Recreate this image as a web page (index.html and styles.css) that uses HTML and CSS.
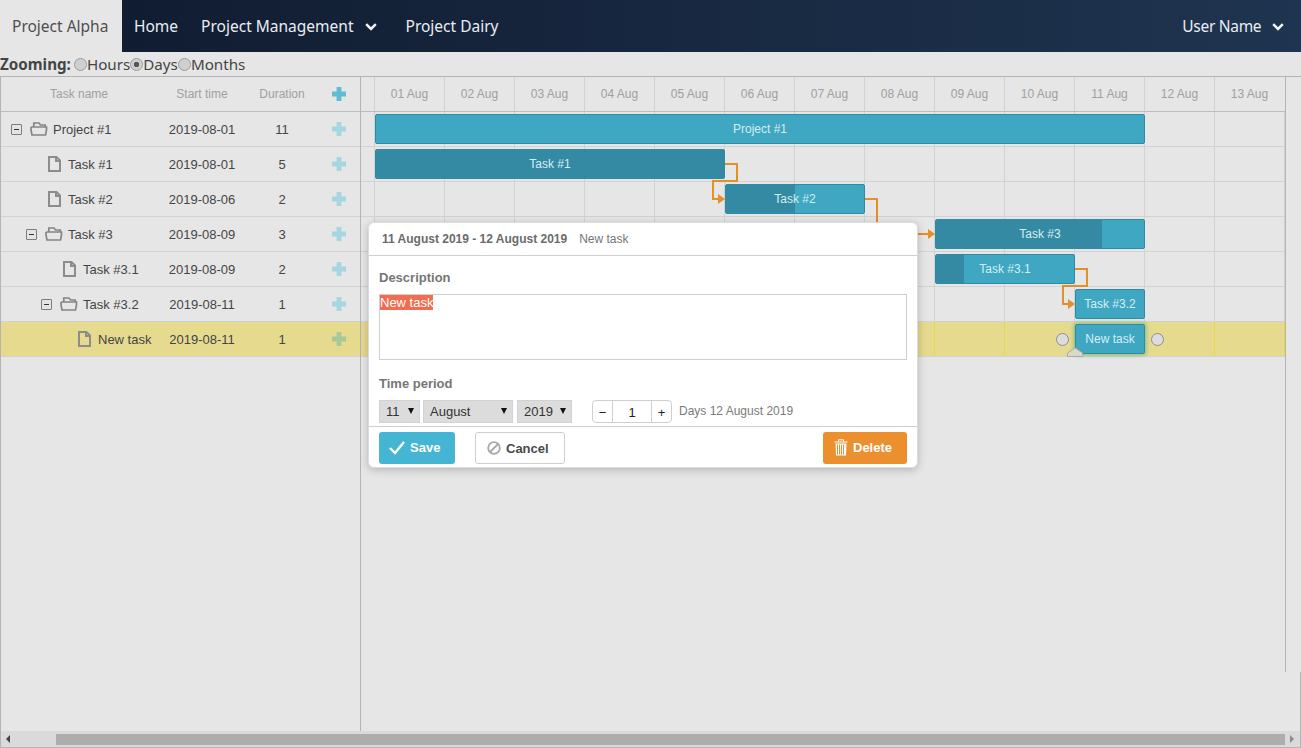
FILE: index.html
```html
<!DOCTYPE html>
<html lang="en">
<head>
<meta charset="UTF-8" />
<meta name="viewport" content="width=device-width, initial-scale=1" />
<title>Project Alpha</title>
<link rel="stylesheet" href="styles.css">
</head>
<body>

<svg class="icon-defs" width="0" height="0">
  <symbol id="i-folder" viewBox="0 0 18 14">
    <path d="M3.800 5V1h5.200l1.500 2h4.700v2M1 5h15.500v1.500M1 5v3l1 5h13.500l1-5V5" fill="none" stroke="#858585" stroke-width="1.700"/>
  </symbol>
  <symbol id="i-file" viewBox="0 0 13 16">
    <path d="M1 1h7.500l3.500 3.500V15H1zM8 1v4h4" fill="none" stroke="#8c8c8c" stroke-width="2"/>
  </symbol>
  <symbol id="i-plus" viewBox="0 0 14 14">
    <path d="M4.600 0h4.800v4.600H14v4.800H9.400V14H4.600V9.400H0V4.600h4.600z" fill="currentColor"/>
  </symbol>
  <symbol id="i-chevron" viewBox="0 0 12 8">
    <path d="M1.200 1.200L6 6l4.800-4.800" fill="none" stroke="currentColor" stroke-width="2.500"/>
  </symbol>
</svg>

<nav class="topnav">
  <a class="brand">Project Alpha</a>
  <a class="nav-link nav-home">Home</a>
  <a class="nav-link nav-drop">Project Management <svg class="chevron"><use href="#i-chevron"/></svg></a>
  <a class="nav-link">Project Dairy</a>
  <a class="nav-link nav-user">User Name <svg class="chevron"><use href="#i-chevron"/></svg></a>
</nav>

<div class="zooming">
  <b>Zooming:</b>
  <label><input type="radio" name="zoom">Hours</label>
  <label><input type="radio" name="zoom" checked>Days</label>
  <label><input type="radio" name="zoom">Months</label>
</div>

<div class="gantt">
  <div class="gantt-body">
    <div class="grid">
      <div class="grid-head">
        <div>Task name</div>
        <div>Start time</div>
        <div>Duration</div>
        <div class="add add-head"><svg><use href="#i-plus"/></svg></div>
      </div>

      <div class="grid-row">
        <div class="tree lvl0"><span class="toggle"></span><svg class="i-folder"><use href="#i-folder"/></svg>Project #1</div>
        <div>2019-08-01</div><div>11</div>
        <div class="add"><svg><use href="#i-plus"/></svg></div>
      </div>
      <div class="grid-row">
        <div class="tree lvl1"><span class="no-toggle"></span><svg class="i-file"><use href="#i-file"/></svg>Task #1</div>
        <div>2019-08-01</div><div>5</div>
        <div class="add"><svg><use href="#i-plus"/></svg></div>
      </div>
      <div class="grid-row">
        <div class="tree lvl1"><span class="no-toggle"></span><svg class="i-file"><use href="#i-file"/></svg>Task #2</div>
        <div>2019-08-06</div><div>2</div>
        <div class="add"><svg><use href="#i-plus"/></svg></div>
      </div>
      <div class="grid-row">
        <div class="tree lvl1"><span class="toggle"></span><svg class="i-folder"><use href="#i-folder"/></svg>Task #3</div>
        <div>2019-08-09</div><div>3</div>
        <div class="add"><svg><use href="#i-plus"/></svg></div>
      </div>
      <div class="grid-row">
        <div class="tree lvl2"><span class="no-toggle"></span><svg class="i-file"><use href="#i-file"/></svg>Task #3.1</div>
        <div>2019-08-09</div><div>2</div>
        <div class="add"><svg><use href="#i-plus"/></svg></div>
      </div>
      <div class="grid-row">
        <div class="tree lvl2"><span class="toggle"></span><svg class="i-folder"><use href="#i-folder"/></svg>Task #3.2</div>
        <div>2019-08-11</div><div>1</div>
        <div class="add"><svg><use href="#i-plus"/></svg></div>
      </div>
      <div class="grid-row selected">
        <div class="tree lvl3"><span class="no-toggle"></span><svg class="i-file"><use href="#i-file"/></svg>New task</div>
        <div>2019-08-11</div><div>1</div>
        <div class="add"><svg><use href="#i-plus"/></svg></div>
      </div>
    </div>

    <div class="timeline">
      <div class="scale">
        <div>01 Aug</div><div>02 Aug</div><div>03 Aug</div><div>04 Aug</div><div>05 Aug</div><div>06 Aug</div><div>07 Aug</div>
        <div>08 Aug</div><div>09 Aug</div><div>10 Aug</div><div>11 Aug</div><div>12 Aug</div><div>13 Aug</div>
      </div>
      <div class="tl-rows">
        <div class="tl-row"></div>
        <div class="tl-row"></div>
        <div class="tl-row"></div>
        <div class="tl-row"></div>
        <div class="tl-row"></div>
        <div class="tl-row"></div>
        <div class="tl-row selected"></div>
      </div>

      <!-- canvas offsets: x from timeline left (361), y from top of rows (112) -->
      <div class="canvas">
        <svg class="links" width="925" height="250">
          <g fill="none" stroke="#e59026" stroke-width="2">
            <path d="M364 52h12v17h-24v18h6"/>
            <path d="M504 87h12v30"/>
            <path d="M557 122h11"/>
            <path d="M714 157h12v17h-24v18h6"/>
          </g>
          <g fill="#e59026">
            <path d="M357 82l7 5-7 5z"/>
            <path d="M567 117l7 5-7 5z"/>
            <path d="M707 187l7 5-7 5z"/>
          </g>
        </svg>

        <div class="bar bar-project" style="left:14px;top:2px;width:770px"><span>Project #1</span></div>
        <div class="bar" style="left:14px;top:37px;width:350px"><i style="width:100%"></i><span>Task #1</span></div>
        <div class="bar" style="left:364px;top:72px;width:140px"><i style="width:50%"></i><span>Task #2</span></div>
        <div class="bar" style="left:574px;top:107px;width:210px"><i style="width:80%"></i><span>Task #3</span></div>
        <div class="bar" style="left:574px;top:142px;width:140px"><i style="width:20%"></i><span>Task #3.1</span></div>
        <div class="bar" style="left:714px;top:177px;width:70px"><span>Task #3.2</span></div>
        <div class="bar bar-active" style="left:714px;top:212px;width:70px"><span>New task</span></div>
        <div class="handle" style="left:695px;top:221px"></div>
        <div class="handle" style="left:790px;top:221px"></div>
        <svg class="drag" style="left:706px;top:235px" width="17" height="10"><path d="M.5 9.500V6L8 .8 15.500 6v3.500z" fill="#dcd8c8" stroke="#a9a9a9"/></svg>
      </div>
    </div>
  </div>

  <div class="scrollbar">
    <span class="arrow arrow-left"></span>
    <div class="thumb"></div>
    <span class="arrow arrow-right"></span>
  </div>

  <div class="lightbox">
    <div class="lb-head"><b>11 August 2019 - 12 August 2019</b><span>New task</span></div>
    <div class="lb-body">
      <h4>Description</h4>
      <div class="desc"><mark>New task</mark></div>
      <h4 class="period-title">Time period</h4>
      <div class="period">
        <div class="sel sel-day">11</div>
        <div class="sel sel-month">August</div>
        <div class="sel sel-year">2019</div>
        <div class="stepper"><button>&minus;</button><span>1</span><button>+</button></div>
        <div class="period-note">Days 12 August 2019</div>
      </div>
    </div>
    <div class="lb-foot">
      <button class="btn btn-save">
        <svg width="16" height="14" viewBox="0 0 16 14"><path d="M1 7l5 5 9-11" fill="none" stroke="#fff" stroke-width="2.400"/></svg>Save
      </button>
      <button class="btn btn-cancel">
        <svg width="14" height="14" viewBox="0 0 14 14"><circle cx="7" cy="7" r="5.800" fill="none" stroke="#a8a8a8" stroke-width="1.800"/><path d="M3 11l8-8" stroke="#a8a8a8" stroke-width="1.800"/></svg>Cancel
      </button>
      <button class="btn btn-delete">
        <svg width="14" height="17" viewBox="0 0 14 17"><path d="M4.500 2.500V.8h5v1.700M.5 3h13" stroke="#fff" fill="none"/><path d="M1.500 4.500h11l-.5 12H2z" fill="#fff"/><path d="M3.500 5.500v10M5.500 5.500v10M7.500 5.500v10M9.500 5.500v10" stroke="#ec8f2e"/></svg>Delete
      </button>
    </div>
  </div>
</div>

</body>
</html>
```
FILE: styles.css
```css
* {
  box-sizing: border-box;
}
html, body {
  height: 100%;
}
body {
  margin: 0;
  background: #e6e6e6;
  color: #454545;
  font-family: "Liberation Sans", Arial, sans-serif;
  font-size: 13px;
  overflow: hidden;
}
.icon-defs {
  position: absolute;
}

/* top bar */
.topnav {
  display: flex;
  align-items: center;
  height: 52px;
  background: linear-gradient(to right, #0f1a2e, #1f3450);
  font-family: "Noto Sans", sans-serif;
  font-size: 15.500px;
}
.topnav a {
  display: flex;
  align-items: center;
  height: 100%;
}
.brand {
  width: 122px;
  padding-left: 12px;
  background: #e6e6e6;
  color: #4f4f4f;
}
.nav-link {
  padding: 0 12px;
  color: #e9edf2;
  white-space: pre;
}
.nav-home {
  padding-right: 11px;
}
.nav-drop {
  padding-right: 17px;
}
.nav-user {
  margin-left: auto;
  padding-right: 17px;
  letter-spacing: -0.3px;
}
.chevron {
  width: 12px;
  height: 8px;
  margin-left: 7px;
  margin-top: 2px;
  color: #f2f4f6;
}

/* zoom radios */
.zooming {
  display: flex;
  align-items: center;
  height: 24px;
  font-family: "Noto Sans", sans-serif;
  font-size: 15.200px;
  color: #454545;
}
.zooming b {
  margin-right: 3px;
}
.zooming label {
  display: flex;
  align-items: center;
}
.zooming input {
  appearance: none;
  width: 13px;
  height: 13px;
  margin: 0;
  border: 1px solid #9c9c9c;
  border-radius: 50%;
  background: #cfcfcf;
}
.zooming input:checked {
  background: radial-gradient(circle, #555 0 2.500px, #cfcfcf 3px);
}

/* gantt */
.gantt {
  position: relative;
  height: 672px;
  border-left: 1px solid #b4b4b4;
  border-bottom: 1px solid #b4b4b4;
}
.gantt::after {
  content: "";
  position: absolute;
  right: 0;
  top: 596px;
  bottom: -1px;
  border-right: 1px solid #b4b4b4;
}
.gantt-body {
  display: flex;
  height: 655px;
  border-top: 1px solid #b4b4b4;
}
.grid {
  width: 360px;
  flex: none;
  border-right: 1px solid #b4b4b4;
}
.grid-head, .grid-row {
  display: grid;
  grid-template-columns: 156px 90px 70px 43px;
  align-items: center;
  text-align: center;
}
.grid-head {
  height: 35px;
  border-bottom: 1px solid #bdbdbd;
  color: #a0a0a0;
  font-size: 12px;
}
.grid-row {
  height: 35px;
  border-bottom: 1px solid #d2d2d2;
}
.grid-row.selected {
  background: #e6da8f;
  border-bottom-color: #d2d2d2;
}
.tree {
  display: flex;
  align-items: center;
  text-align: left;
}
.lvl0 { padding-left: 10px; }
.lvl1 { padding-left: 25px; }
.lvl2 { padding-left: 40px; }
.lvl3 { padding-left: 55px; }
.toggle, .no-toggle {
  flex: none;
  width: 11px;
  height: 11px;
  margin-right: 8px;
}
.toggle {
  border: 1px solid #7d7d7d;
  border-radius: 1px;
  background: linear-gradient(#333, #333) center / 5px 1px no-repeat #e4e4e4;
}
.i-folder {
  flex: none;
  width: 18px;
  height: 14px;
  margin-right: 5px;
}
.i-file {
  flex: none;
  width: 13px;
  height: 16px;
  margin: 0 7px 0 3px;
}
.add {
  display: flex;
  justify-content: center;
  color: #a6d6e0;
}
.add svg {
  width: 14px;
  height: 14px;
}
.add-head {
  color: #5fbcd3;
}
.selected .add {
  color: #a8c995;
}

/* timeline */
.timeline {
  position: relative;
  width: 925px;
  height: 595px;
  flex: none;
  border-right: 1px solid #b4b4b4;
}
.scale {
  display: grid;
  grid-template-columns: repeat(13, 70px);
  height: 35px;
  padding-left: 13px;
  border-bottom: 1px solid #bdbdbd;
  color: #a0a0a0;
  font-size: 12px;
}
.scale div {
  display: flex;
  align-items: center;
  justify-content: center;
  border-left: 1px solid #d2d2d2;
}
.tl-row {
  height: 35px;
  border-bottom: 1px solid #d2d2d2;
  background: repeating-linear-gradient(to right, #d2d2d2 0 1px, transparent 1px 70px) 13px 0 / 912px 100% no-repeat;
}
.tl-row.selected {
  background: repeating-linear-gradient(to right, #e8d84e 0 1px, transparent 1px 70px) 13px 0 / 912px 100% no-repeat, #e6da8f;
}
.canvas {
  position: absolute;
  left: 0;
  top: 35px;
  width: 100%;
}
.links {
  position: absolute;
  left: 0;
  top: 0;
}
.bar {
  position: absolute;
  height: 30px;
  padding-top: 1px;
  background: #3fa7c2;
  border: 1px solid #2f8ba3;
  border-radius: 2px;
  overflow: hidden;
  display: flex;
  align-items: center;
  justify-content: center;
  color: #d5eef4;
  font-size: 12px;
  line-height: 15px;
}
.bar i {
  position: absolute;
  left: 0;
  top: 0;
  bottom: 0;
  background: #348aa3;
}
.bar span {
  position: relative;
}
.bar-active {
  box-shadow: 0 0 4px 1px #7cb98e;
}
.handle {
  position: absolute;
  width: 13px;
  height: 13px;
  border: 1px solid #8f8f8f;
  border-radius: 50%;
  background: #dcdcdc;
}
.drag {
  position: absolute;
}

/* scrollbar */
.scrollbar {
  display: flex;
  align-items: center;
  height: 16px;
  background: #dadada;
}
.thumb {
  width: 1229px;
  height: 11px;
  margin-left: 46px;
  background: #adadab;
}
.arrow {
  width: 0;
  height: 0;
  border-top: 4px solid transparent;
  border-bottom: 4px solid transparent;
}
.arrow-left {
  margin-left: 5px;
  border-right: 4px solid #444;
}
.arrow-right {
  margin-left: 5px;
  border-left: 4px solid #8a8a8a;
}

/* task edit box */
.lightbox {
  position: absolute;
  left: 367px;
  top: 146px;
  width: 550px;
  height: 246px;
  background: #fff;
  border: 1px solid #dcdcdc;
  border-radius: 6px;
  box-shadow: 0 2px 8px rgb(0 0 0 / 0.22);
  color: #767676;
  z-index: 2;
}
.lb-head {
  display: flex;
  align-items: center;
  height: 33px;
  padding-left: 13px;
  border-bottom: 1px solid #cfcfcf;
  font-size: 12px;
}
.lb-head b {
  color: #6b6b6b;
  margin-right: 12px;
}
.lb-body {
  height: 171px;
  padding: 14px 10px 0;
  border-bottom: 1px solid #cfcfcf;
}
.lb-body h4 {
  margin: 0 0 9px;
  font-size: 13px;
  line-height: 15px;
  color: #767676;
}
.desc {
  height: 66px;
  padding: 0;
  border: 1px solid #cfcfcf;
  color: #fff;
  line-height: 15px;
}
.desc mark {
  display: inline-block;
  background: #f26c52;
  color: #fff;
}
.lb-body .period-title {
  margin: 16px 0 9px;
}
.period {
  display: flex;
  align-items: center;
  height: 23px;
}
.sel {
  position: relative;
  height: 23px;
  padding: 0 6px;
  margin-right: 3px;
  background: #dcdcdc;
  border: 1px solid #d2d2d2;
  color: #333;
  line-height: 22px;
}
.sel::after {
  content: "";
  position: absolute;
  right: 5px;
  top: 7px;
  border-top: 6px solid #111;
  border-left: 3.500px solid transparent;
  border-right: 3.500px solid transparent;
}
.sel-day { width: 41px; }
.sel-month { width: 90px; margin-right: 4px; }
.sel-year { width: 55px; margin-right: 20px; }
.stepper {
  display: flex;
  width: 80px;
  height: 23px;
  border: 1px solid #cfcfcf;
  border-radius: 4px;
  color: #222;
}
.stepper button {
  width: 19px;
  padding: 2px 0 0;
  border: 0;
  background: none;
  color: #222;
  font: 13px "Liberation Sans", Arial, sans-serif;
}
.stepper span {
  flex: 1;
  text-align: center;
  line-height: 23px;
  border-left: 1px solid #cfcfcf;
  border-right: 1px solid #cfcfcf;
}
.period-note {
  margin-left: 7px;
  margin-bottom: 2px;
  font-size: 12px;
  color: #7a7a7a;
}
.lb-foot {
  display: flex;
  padding: 5px 10px 0;
}
.btn {
  display: flex;
  align-items: center;
  gap: 5px;
  height: 32px;
  padding: 0 0 1px 10px;
  border: 0;
  border-radius: 3px;
  color: #fff;
  font: bold 13px "Liberation Sans", Arial, sans-serif;
}
.btn-save {
  width: 76px;
  background: #44b5d3;
}
.btn-cancel {
  width: 90px;
  margin-left: 20px;
  padding: 0 0 0 11px;
  background: #fff;
  border: 1px solid #cfcfcf;
  color: #4a4a4a;
}
.btn-delete {
  width: 84px;
  margin-left: auto;
  padding-left: 11px;
  background: #ec8f2e;
}
```
